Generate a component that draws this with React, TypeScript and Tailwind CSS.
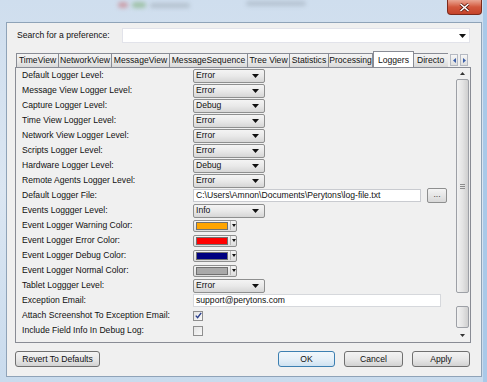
import React from "react";

type Row =
  | { label: string; kind: "combo"; value: string }
  | { label: string; kind: "file"; value: string }
  | { label: string; kind: "color"; color: string }
  | { label: string; kind: "text"; value: string }
  | { label: string; kind: "check"; checked: boolean };

const rows: Row[] = [
  { label: "Default Logger Level:", kind: "combo", value: "Error" },
  { label: "Message View Logger Level:", kind: "combo", value: "Error" },
  { label: "Capture Logger Level:", kind: "combo", value: "Debug" },
  { label: "Time View Logger Level:", kind: "combo", value: "Error" },
  { label: "Network View Logger Level:", kind: "combo", value: "Error" },
  { label: "Scripts Logger Level:", kind: "combo", value: "Error" },
  { label: "Hardware Logger Level:", kind: "combo", value: "Debug" },
  { label: "Remote Agents Logger Level:", kind: "combo", value: "Error" },
  { label: "Default Logger File:", kind: "file", value: "C:\\Users\\Amnon\\Documents\\Perytons\\log-file.txt" },
  { label: "Events Loggger Level:", kind: "combo", value: "Info" },
  { label: "Event Logger Warning Color:", kind: "color", color: "#ffa500" },
  { label: "Event Logger Error Color:", kind: "color", color: "#ff0000" },
  { label: "Event Logger Debug Color:", kind: "color", color: "#000080" },
  { label: "Event Logger Normal Color:", kind: "color", color: "#a9a9a9" },
  { label: "Tablet Loggger Level:", kind: "combo", value: "Error" },
  { label: "Exception Email:", kind: "text", value: "support@perytons.com" },
  { label: "Attach Screenshot To Exception Email:", kind: "check", checked: true },
  { label: "Include Field Info In Debug Log:", kind: "check", checked: false },
];

const tabs = [
  { name: "TimeView", w: "w-[43px]" },
  { name: "NetworkView", w: "w-[54px]" },
  { name: "MessageView", w: "w-[59px]" },
  { name: "MessageSequence", w: "w-[79px]" },
  { name: "Tree View", w: "w-[43px]" },
  { name: "Statistics", w: "w-[40px]" },
  { name: "Processing", w: "w-[45px]" },
  { name: "Loggers", w: "w-[41px]", active: true },
  // cut off by the strip in the original dialog
  { name: "Directo", w: "w-[36px]", clipped: true },
];

const Arrow = ({ small }: { small?: boolean }) => (
  <svg width={small ? 4 : 7} height={small ? 3 : 4} viewBox={small ? "0 0 4 3" : "0 0 7 4"}>
    <path d={small ? "M0 0H4L2 3Z" : "M0 0H7L3.5 4Z"} fill="#111" />
  </svg>
);

const Combo = ({ value }: { value: string }) => (
  <div className="flex h-[14px] w-[72px] items-center justify-between rounded-[2px] border border-[#8e8f8f] bg-gradient-to-b from-[#f4f4f4] via-[#e9e9e9] to-[#d6d6d6] pl-[2px] pr-[5px]">
    <span>{value}</span>
    <Arrow />
  </div>
);

const ColorCombo = ({ color }: { color: string }) => (
  <div className="flex h-[12px] w-[44px] items-center rounded-[2px] border border-[#8e8f8f] bg-gradient-to-b from-[#f4f4f4] to-[#dcdcdc] pl-[2px]">
    <div className="h-[8px] w-[32px] border border-[#707070]" style={{ backgroundColor: color }} />
    <div className="ml-[2px] h-[9px] w-px bg-[#b8b8b8]" />
    <div className="flex flex-1 justify-center">
      <Arrow small />
    </div>
  </div>
);

const Button = ({ label, w, focused }: { label: string; w: string; focused?: boolean }) => (
  <div
    className={`flex h-[16px] ${w} items-center justify-center rounded-[3px] border ${
      focused
        ? "border-[#3c7fb1] bg-gradient-to-b from-[#f0f7fc] via-[#e6f0f8] to-[#cfe2f1]"
        : "border-[#707070] bg-gradient-to-b from-[#f3f3f3] via-[#e8e8e8] to-[#d2d2d2]"
    }`}
  >
    {label}
  </div>
);

const Field = ({ row }: { row: Row }) => {
  if (row.kind === "combo") return <Combo value={row.value} />;
  if (row.kind === "color") return <ColorCombo color={row.color} />;
  if (row.kind === "file")
    return (
      <div className="flex items-center">
        <div className="flex h-[13px] w-[228px] items-center border border-[#c9cbd0] bg-white pl-[2px]">{row.value}</div>
        <div className="ml-[6px] flex h-[15px] w-[20px] items-start justify-center rounded-[2px] border border-[#8e8f8f] bg-gradient-to-b from-[#f4f4f4] to-[#d8d8d8] text-[#444] leading-[10px]">
          ...
        </div>
      </div>
    );
  if (row.kind === "text")
    return <div className="flex h-[13px] w-[248px] items-center border border-[#d6d8dc] bg-white pl-[2px]">{row.value}</div>;
  return (
    <div className="flex h-[10px] w-[10px] items-center justify-center border border-[#8f8f8f] bg-gradient-to-br from-[#e4e4e4] to-[#f8f8f8]">
      {row.checked && (
        <svg width="7" height="7" viewBox="0 0 7 7">
          <path d="M0.8 3.6L2.6 5.6L6.2 0.8" stroke="#2a3f8c" strokeWidth="1.4" fill="none" />
        </svg>
      )}
    </div>
  );
};

export default function App() {
  return (
    <div className="relative h-[382px] w-[487px] overflow-hidden bg-gradient-to-b from-[#cfdeee] via-[#dbe6f2] to-[#c9dbed] pb-[5px] pl-[6px] pr-[5px] pt-[22px] font-['Liberation_Sans',Arial,sans-serif] text-[8.6px] text-[#111]">
      {/* blurry glass content */}
      <div className="absolute left-[118px] top-[2px] h-[6px] w-[10px] rounded-full bg-[#c9787e] opacity-60 blur-[2px]" />
      <div className="absolute left-[132px] top-[2px] h-[6px] w-[14px] rounded-full bg-[#7fb07a] opacity-60 blur-[2px]" />
      <div className="absolute left-[150px] top-[3px] h-[5px] w-[40px] rounded-full bg-[#9aa6b0] opacity-50 blur-[2px]" />
      <div className="absolute left-[246px] top-[1px] h-[5px] w-[60px] rounded-full bg-[#8e9aa6] opacity-40 blur-[2px]" />
      <div className="absolute right-0 top-0 h-full w-[4px] bg-[#a9c9e8]" />

      {/* close button */}
      <div className="absolute left-[447px] top-0 flex h-[15px] w-[35px] items-center justify-center rounded-b-[4px] border border-t-0 border-[#7b2a1c] bg-gradient-to-b from-[#e9a593] via-[#d2573d] to-[#c5432a]">
        <svg width="11" height="9" viewBox="0 0 11 9">
          <path d="M1.5 1L9.5 8M9.5 1L1.5 8" stroke="#5a1a10" strokeWidth="3" />
          <path d="M1.5 1L9.5 8M9.5 1L1.5 8" stroke="#fff" strokeWidth="1.6" />
        </svg>
      </div>

      <div className="flex h-full flex-col border border-[#8fa3b8] bg-[#f0f0f0]">
        {/* search */}
        <div className="mt-[5px] flex h-[15px] items-center pl-[10px] pr-[11px]">
          <span className="w-[105px]">Search for a preference:</span>
          <div className="flex h-full flex-1 items-center justify-end border border-[#e2e3ea] bg-white pr-[3px]">
            <Arrow />
          </div>
        </div>

        {/* tabs */}
        <div className="ml-[9px] mt-[8px] flex h-[16px] items-end">
          <div className="flex h-full w-[432px] items-end overflow-hidden">
            {tabs.map((t) => (
              <div
                key={t.name}
                className={`flex shrink-0 items-center whitespace-nowrap border border-b-0 border-[#898c95] ${t.w} ${
                  t.clipped ? "justify-start pl-[3px]" : "justify-center"
                } ${
                  t.active
                    ? "relative z-10 -mb-px h-[17px] bg-white"
                    : "-ml-px h-[14px] bg-gradient-to-b from-[#f3f3f3] via-[#ebebeb] to-[#d9d9d9] first:ml-0"
                }`}
              >
                {t.name}
              </div>
            ))}
          </div>
          <div className="mb-[1px] ml-[2px] flex gap-[2px]">
            {["M3 0L0 2.5L3 5Z", "M0 0L3 2.5L0 5Z"].map((d) => (
              <div key={d} className="flex h-[12px] w-[8px] items-center justify-center border border-[#b5b9c2] bg-gradient-to-b from-[#f6f6f6] to-[#dedede]">
                <svg width="3" height="5" viewBox="0 0 3 5">
                  <path d={d} fill="#3b5ea8" />
                </svg>
              </div>
            ))}
          </div>
        </div>

        {/* panel */}
        <div className="ml-[8px] mr-[10px] flex h-[276px] border border-[#898c95] bg-[#f0f0f0]">
          <div className="flex-1 pl-[6px]">
            {rows.map((r) => (
              <div key={r.label} className="flex h-[15px] items-center">
                <span className="w-[171px] shrink-0 whitespace-nowrap">{r.label}</span>
                <Field row={r} />
              </div>
            ))}
          </div>
          <div className="mr-px flex w-[13px] flex-col">
            <div className="flex h-[11px] items-center justify-center">
              <svg width="5" height="3" viewBox="0 0 5 3">
                <path d="M0 3L2.5 0L5 3Z" fill="#333" />
              </svg>
            </div>
            <div className="flex h-[214px] items-center justify-center rounded-[2px] border border-[#9da0a6] bg-gradient-to-r from-[#f2f2f2] via-[#e4e4e4] to-[#cfcfcf]">
              <div className="flex flex-col gap-px">
                <div className="h-px w-[5px] bg-[#8c8c8c]" />
                <div className="h-px w-[5px] bg-[#8c8c8c]" />
                <div className="h-px w-[5px] bg-[#8c8c8c]" />
              </div>
            </div>
            <div className="h-[13px]" />
            <div className="h-[22px] rounded-[2px] border border-[#9da0a6] bg-gradient-to-r from-[#f2f2f2] via-[#e4e4e4] to-[#cfcfcf]" />
            <div className="flex flex-1 items-center justify-center">
              <svg width="5" height="3" viewBox="0 0 5 3">
                <path d="M0 0L2.5 3L5 0Z" fill="#333" />
              </svg>
            </div>
          </div>
        </div>

        {/* buttons */}
        <div className="ml-[8px] mr-[11px] mt-[8px] flex items-center">
          <Button label="Revert To Defaults" w="w-[85px]" />
          <div className="flex-1" />
          <div className="flex gap-[9px]">
            <Button label="OK" w="w-[57px]" focused />
            <Button label="Cancel" w="w-[59px]" />
            <Button label="Apply" w="w-[58px]" />
          </div>
        </div>
      </div>
    </div>
  );
}
